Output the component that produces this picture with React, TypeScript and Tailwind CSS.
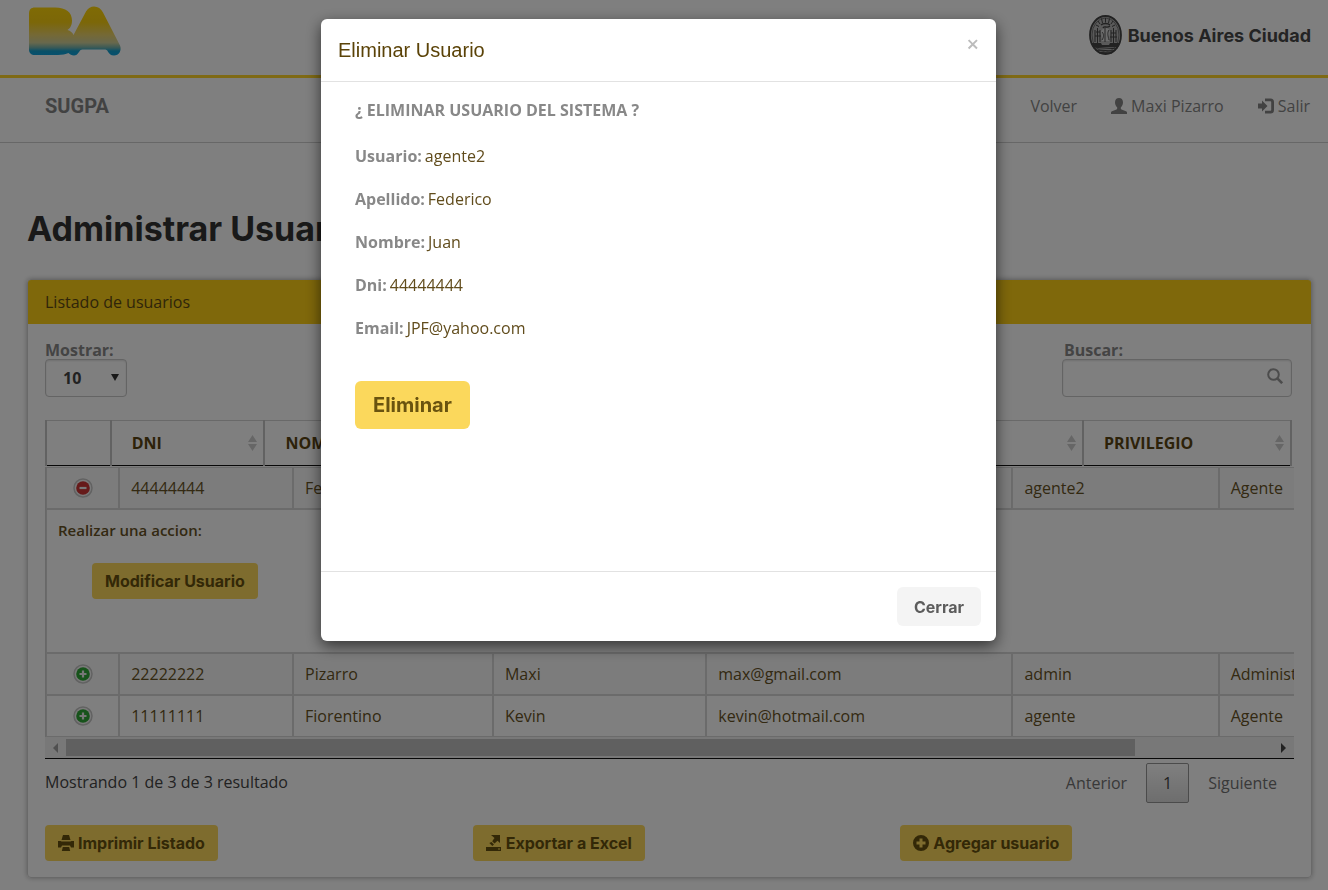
import type { ReactNode } from "react";

type User = {
  dni: string;
  apellido: string;
  nombre: string;
  email: string;
  usuario: string;
  privilegio: string;
};

const users: User[] = [
  { dni: "44444444", apellido: "Federico", nombre: "Juan", email: "JPF@yahoo.com", usuario: "agente2", privilegio: "Agente" },
  { dni: "22222222", apellido: "Pizarro", nombre: "Maxi", email: "max@gmail.com", usuario: "admin", privilegio: "Administrador" },
  { dni: "11111111", apellido: "Fiorentino", nombre: "Kevin", email: "kevin@hotmail.com", usuario: "agente", privilegio: "Agente" },
];

const headings = ["DNI", "NOMBRE", "APELLIDO", "EMAIL", "USUARIO", "PRIVILEGIO"];

function Columns() {
  return (
    <colgroup>
      <col className="w-[5.2%]" />
      <col className="w-[12.35%]" />
      <col className="w-[14.2%]" />
      <col className="w-[15.15%]" />
      <col className="w-[21.75%]" />
      <col className="w-[14.65%]" />
      <col className="w-[16.7%]" />
    </colgroup>
  );
}

function BaLogo() {
  return (
    <svg className="h-[50px] w-[94px]" viewBox="28 5.5 94 50" role="img" aria-label="BA">
      <defs>
        <linearGradient id="ba" x1="0" y1="0" x2="0" y2="1">
          <stop offset="0" stopColor="#ffd60a" />
          <stop offset="0.32" stopColor="#f8ce10" />
          <stop offset="0.58" stopColor="#ead26c" />
          <stop offset="0.74" stopColor="#d0d09a" />
          <stop offset="0.84" stopColor="#74b4ae" />
          <stop offset="0.91" stopColor="#12a0d0" />
          <stop offset="1" stopColor="#0fa2dc" />
        </linearGradient>
      </defs>
      <path
        fill="url(#ba)"
        d="M35 7H55C66 7 72 12 72 20C72 25 70 28 67.500 29.500C70.500 30.500 72.500 32 73.500 34.500L86 11C88 7.500 91 6 94 6C98 6 101 8 103 12L120 45C122 50 119 55 114 55C110.500 55 109 53 107.500 50.500C107 49.500 106 49 104.500 49H82.500C81 49 80 49.800 79 51.500C77.500 54 76 55 74 55C71.500 55 70 54 68.500 52.500C66 53.800 62 54.500 58 54.500H35C31 54.500 29 52.500 29 49V13C29 9 31 7 35 7Z"
      />
    </svg>
  );
}

function CitySeal() {
  return (
    <svg className="h-10 w-[33px]" viewBox="0 0 33 40" fill="none" stroke="#444" aria-hidden="true">
      <ellipse cx="16.500" cy="20" rx="15.500" ry="19" strokeWidth="1.800" fill="#b4b4b4" />
      <ellipse cx="16.500" cy="20" rx="13.500" ry="17" strokeWidth="0.600" />
      <path strokeWidth="1" d="M9 6L11 9M12.500 3.500L13.500 8M16.500 3V7.500M20.500 3.500L19.500 8M24 6L22 9M7 10L10 11.500M26 10L23 11.500" />
      <path strokeWidth="1.400" d="M12 10C14 8 19 8 21 10M14 13C16 10 17 14 21 11" />
      <path strokeWidth="1" d="M6 15V27M8.500 13V28M11 15V27M7 17H11M6 21H12M22 15V27M24.500 13V28M27 15V27M22 18H27M21 22H28" />
      <path fill="#d8d8d8" stroke="none" d="M12 16C15 12 19 12 21 16L20 26H13Z" />
      <path strokeWidth="0.900" d="M16 13V27M13 17C15 19 15 22 13 25M20 15C18 18 19 21 20 25" />
      <path fill="#444" stroke="none" d="M2 28H12L13 30H20L21 28H31L29 32H4Z" />
      <path strokeWidth="1.200" d="M4.500 33C12 31.500 20 34.500 28.500 33M6.500 35.500C13 34 20 37 26.500 35.500M10 37.800C14 37 19 38.500 23 37.800" />
    </svg>
  );
}

function Icon({ children }: { children: ReactNode }) {
  return (
    <svg className="size-4 shrink-0" viewBox="0 0 16 16" fill="currentColor" aria-hidden="true">
      {children}
    </svg>
  );
}

const UserIcon = () => (
  <Icon>
    <path d="M8 0C5.600 0 4 1.500 4 4.200C4 6.600 5 8.400 6.200 9.400V10.500C6.200 11 5.900 11.200 5.500 11.400L1 13.300C.3 13.600 0 14 0 14.600V16H16V14.600C16 14 15.700 13.600 15 13.300L10.500 11.400C10.100 11.200 9.800 11 9.800 10.500V9.400C11 8.400 12 6.600 12 4.200C12 1.500 10.400 0 8 0Z" />
  </Icon>
);

const LogInIcon = () => (
  <Icon>
    <path d="M0 5.500H4V2.500L9.500 8L4 13.500V10.500H0Z" />
    <path fill="none" stroke="currentColor" strokeWidth="2.800" d="M7 1.900H12.500C14 1.900 14.600 2.500 14.600 4V12C14.600 13.500 14 14.100 12.500 14.100H7" />
  </Icon>
);

const SearchIcon = () => (
  <Icon>
    <circle cx="6.500" cy="6.500" r="5.300" fill="none" stroke="currentColor" strokeWidth="2" />
    <path stroke="currentColor" strokeWidth="2.600" d="M10.300 10.300L15.200 15.200" />
  </Icon>
);

const PrintIcon = () => (
  <Icon>
    <path d="M5 0H11L12.500 5H3.500Z" />
    <path d="M0 6H2.500L3.500 6.500H12.500L13.500 6H16V12.500H13L12 10.500H4L3 12.500H0Z" />
    <path d="M4.800 12H11.200L12.200 16H3.800Z" />
  </Icon>
);

const ExportIcon = () => (
  <Icon>
    <path d="M5 0H14V8L11.500 5.800L8.500 8.600L6.200 6.300L8.500 3Z" />
    <path d="M5.500 7L8 9.500L6.300 11L3.300 8Z" />
    <path fillRule="evenodd" d="M0 12H15V16H0ZM12 13.500V14.500H14V13.500Z" />
  </Icon>
);

const PlusIcon = () => (
  <Icon>
    <path fillRule="evenodd" d="M8 0A8 8 0 1 0 8 16A8 8 0 1 0 8 0ZM6.500 3.500H9.500V6.500H12.500V9.500H9.500V12.500H6.500V9.500H3.500V6.500H6.500Z" />
  </Icon>
);

function SortIcon() {
  return (
    <svg className="h-4 w-[9px]" viewBox="0 0 9 16" fill="#cdcdcd" aria-hidden="true">
      <path d="M4.500 0L9 7H0ZM0 9H9L4.500 16Z" />
    </svg>
  );
}

function RowToggle({ open }: { open: boolean }) {
  return (
    <button type="button" aria-label={open ? "Contraer fila" : "Expandir fila"} className="block">
      <svg className="size-5" viewBox="0 0 20 20" aria-hidden="true">
        <circle cx="10" cy="10" r="9" fill="#f4f4f4" stroke="#c4c4c4" strokeWidth="1.500" />
        <circle cx="10" cy="10" r="6.800" fill={open ? "#cc3434" : "#2fa736"} />
        <path stroke="#eee" strokeWidth="2.200" d={open ? "M6.500 10H13.500" : "M6.500 10H13.500M10 6.500V13.500"} />
      </svg>
    </button>
  );
}

function ActionButton({ icon, children }: { icon?: ReactNode; children: ReactNode }) {
  return (
    <button
      type="button"
      className="flex h-9 items-center gap-1 rounded bg-[#fdd85c] px-[13px] font-[Inter,sans-serif] text-[16px] font-bold text-[#66510f]"
    >
      {icon}
      {children}
    </button>
  );
}

function UserRow({ user, open, shaded }: { user: User; open: boolean; shaded: boolean }) {
  const cell = "border border-[#d6d6d6] px-[11px] whitespace-nowrap";
  return (
    <tr className={shaded ? "h-[42px] bg-[#f9f9f9]" : "h-[42px]"}>
      <td className={cell}>
        <div className="flex justify-center">
          <RowToggle open={open} />
        </div>
      </td>
      <td className={cell}>{user.dni}</td>
      <td className={cell}>{user.apellido}</td>
      <td className={cell}>{user.nombre}</td>
      <td className={cell}>{user.email}</td>
      <td className={cell}>{user.usuario}</td>
      <td className={cell}>{user.privilegio}</td>
    </tr>
  );
}

function Page() {
  return (
    <div className="min-h-screen bg-white pb-3">
      <header className="flex h-[78px] items-start justify-between border-b-[3px] border-[#ffd52a] pt-[6px] pr-[17px] pl-7">
        <BaLogo />
        <div className="flex items-center gap-[6px] pt-[9px]">
          <CitySeal />
          <span className="font-[Inter,sans-serif] text-[18px] font-bold text-[#484848]">Buenos Aires Ciudad</span>
        </div>
      </header>

      <nav className="flex h-[65px] items-start justify-between border-b border-[#cfcfcf] pt-4 pr-[18px] pl-[45px] text-[#858585]">
        <a href="#inicio" className="font-[Roboto,sans-serif] text-[20px] leading-6 font-bold">
          SUGPA
        </a>
        <div className="flex items-center gap-[34px] leading-6">
          <a href="#volver">Volver</a>
          <a href="#perfil" className="flex items-center gap-1">
            <UserIcon />
            Maxi Pizarro
          </a>
          <a href="#salir" className="flex items-center gap-1">
            <LogInIcon />
            Salir
          </a>
        </div>
      </nav>

      <main className="pr-4 pl-[27px]">
        <h1 className="pt-[64px] pb-[29px] font-[Inter,sans-serif] text-[34px] leading-[43px] font-bold text-[#333]">
          Administrar Usuarios
        </h1>

        <section className="rounded border border-[#d2d2d2] shadow-[0_0_5px_rgba(0,0,0,0.3)]">
          <h2 className="flex h-11 items-center rounded-t-[3px] bg-[#ffd016] px-[17px] text-[#5e4a14]">
            Listado de usuarios
          </h2>

          <div className="px-[17px] pt-[17px]">
            <div className="flex justify-between pr-[2px]">
              <div>
                <label htmlFor="mostrar" className="block leading-[18px] font-bold text-[#888]">
                  Mostrar:
                </label>
                <div className="relative w-[82px]">
                  <select
                    id="mostrar"
                    className="h-[38px] w-full appearance-none rounded border border-[#c8c8c8] bg-white pl-[17px] font-bold text-[#444] shadow-[inset_0_1px_2px_rgba(0,0,0,0.12)]"
                  >
                    <option>10</option>
                    <option>25</option>
                    <option>50</option>
                  </select>
                  <svg className="pointer-events-none absolute top-[15px] right-2 h-[7px] w-2" viewBox="0 0 8 7" fill="#333" aria-hidden="true">
                    <path d="M0 0H8L4 7Z" />
                  </svg>
                </div>
              </div>
              <div>
                <label htmlFor="buscar" className="block pl-[2px] leading-[18px] font-bold text-[#888]">
                  Buscar:
                </label>
                <div className="relative w-[230px]">
                  <input
                    id="buscar"
                    type="text"
                    className="h-[38px] w-full rounded border border-[#c8c8c8] bg-white pr-9 pl-3 text-[#333] shadow-[inset_0_1px_2px_rgba(0,0,0,0.12)]"
                  />
                  <span className="pointer-events-none absolute top-[9px] right-[9px] text-[#999]">
                    <SearchIcon />
                  </span>
                </div>
              </div>
            </div>

            <div className="mt-[23px] border-b border-[#111]">
              <div className="pr-[2px] pb-px">
                <table className="w-full table-fixed border-collapse text-left text-[#5b4512]">
                  <Columns />
                  <thead>
                    <tr className="h-[45px]">
                      <th className="border-x-2 border-t border-b border-x-[#c4c4c4] border-t-[#d2d2d2] border-b-[#111]" aria-label="Acciones" />
                      {headings.map((heading) => (
                        <th
                          key={heading}
                          className="border-x-2 border-t border-b border-x-[#c4c4c4] border-t-[#d2d2d2] border-b-[#111] pr-[6px] pl-5 font-bold"
                        >
                          <div className="flex items-center justify-between">
                            {heading}
                            <SortIcon />
                          </div>
                        </th>
                      ))}
                    </tr>
                  </thead>
                </table>
              </div>

              <div className="overflow-hidden">
                <table className="w-[112.8%] table-fixed border-separate border-spacing-0 border-l border-[#d0d0d0] text-[#675224]">
                  <Columns />
                  <tbody>
                    <UserRow user={users[0]} open shaded />
                    <tr className="h-36">
                      <td colSpan={7} className="border border-[#d6d6d6] px-[11px] pt-2 align-top">
                        <p className="leading-6 font-semibold text-[15px]">Realizar una accion:</p>
                        <div className="flex pt-[21px] pl-[34px]">
                          <ActionButton>Modificar Usuario</ActionButton>
                        </div>
                      </td>
                    </tr>
                    <UserRow user={users[1]} open={false} shaded />
                    <UserRow user={users[2]} open={false} shaded={false} />
                  </tbody>
                </table>
                <div className="flex h-[21px] items-center bg-[#f1f1f1] px-2">
                  <svg className="h-[10px] w-[5px]" viewBox="0 0 5 10" fill="#a0a0a0" aria-hidden="true">
                    <path d="M5 0V10L0 5Z" />
                  </svg>
                  <div className="mx-2 flex-1">
                    <div className="h-[17px] w-[88.6%] bg-[#c1c1c1]" />
                  </div>
                  <svg className="h-[10px] w-[5px]" viewBox="0 0 5 10" fill="#444" aria-hidden="true">
                    <path d="M0 0V10L5 5Z" />
                  </svg>
                </div>
              </div>
            </div>

            <div className="flex items-start justify-between pt-1">
              <p className="pt-[7px] leading-6 text-[#444]">Mostrando 1 de 3 de 3 resultado</p>
              <div className="flex items-center gap-[19px] pr-[17px] text-[#727272]">
                <button type="button">Anterior</button>
                <button
                  type="button"
                  className="h-10 w-[43px] rounded-xs border border-[#979797] bg-linear-to-b from-white to-[#dcdcdc] text-[#444]"
                >
                  1
                </button>
                <button type="button">Siguiente</button>
              </div>
            </div>
          </div>

          <div className="grid grid-cols-3 pt-[22px] pb-4">
            <div className="flex px-[17px]">
              <ActionButton icon={<PrintIcon />}>Imprimir Listado</ActionButton>
            </div>
            <div className="flex px-[17px]">
              <ActionButton icon={<ExportIcon />}>Exportar a Excel</ActionButton>
            </div>
            <div className="flex px-[17px]">
              <ActionButton icon={<PlusIcon />}>Agregar usuario</ActionButton>
            </div>
          </div>
        </section>
      </main>
    </div>
  );
}

function DeleteDialog({ user }: { user: User }) {
  const fields = [
    ["Usuario:", user.usuario],
    ["Apellido:", user.apellido],
    ["Nombre:", user.nombre],
    ["Dni:", user.dni],
    ["Email:", user.email],
  ];
  return (
    <div className="fixed inset-0 flex items-start justify-center bg-black/50 pt-[19px] pr-[11px]">
      <div
        role="dialog"
        aria-modal="true"
        aria-labelledby="dialog-title"
        className="w-full max-w-[675px] rounded-md bg-white shadow-[0_5px_15px_rgba(0,0,0,0.6)]"
      >
        <div className="flex items-start justify-between border-b border-[#e2e2e2] px-[17px] py-[18px]">
          <h2 id="dialog-title" className="font-['Liberation_Sans',sans-serif] text-[20px] leading-[26px] text-[#5b4308]">
            Eliminar Usuario
          </h2>
          <button type="button" aria-label="Cerrar ventana" className="text-[22px] leading-3 font-semibold text-[#bcbcbc]">
            ×
          </button>
        </div>
        <div className="px-[34px] pt-[17px] pb-[142px] leading-[22px]">
          <p className="mb-6 font-bold text-[#888]">¿ ELIMINAR USUARIO DEL SISTEMA ?</p>
          <dl className="flex flex-col gap-[21px]">
            {fields.map(([label, value]) => (
              <div key={label} className="flex gap-[3px]">
                <dt className="font-bold text-[#888]">{label}</dt>
                <dd className="text-[#614c1c]">{value}</dd>
              </div>
            ))}
          </dl>
          <button
            type="button"
            className="mt-[42px] block h-12 rounded-md bg-[#fbd85c] px-[18px] font-[Inter,sans-serif] text-[20px] font-bold text-[#69530f]"
          >
            Eliminar
          </button>
        </div>
        <div className="flex justify-end border-t border-[#e2e2e2] p-[15px]">
          <button
            type="button"
            className="h-[39px] rounded-md bg-[#f4f4f4] px-[17px] font-[Inter,sans-serif] text-[16px] font-bold text-[#5c5c5c]"
          >
            Cerrar
          </button>
        </div>
      </div>
    </div>
  );
}

export default function App() {
  return (
    <div className="font-['Open_Sans',sans-serif] text-[16px]">
      <Page />
      <DeleteDialog user={users[0]} />
    </div>
  );
}
